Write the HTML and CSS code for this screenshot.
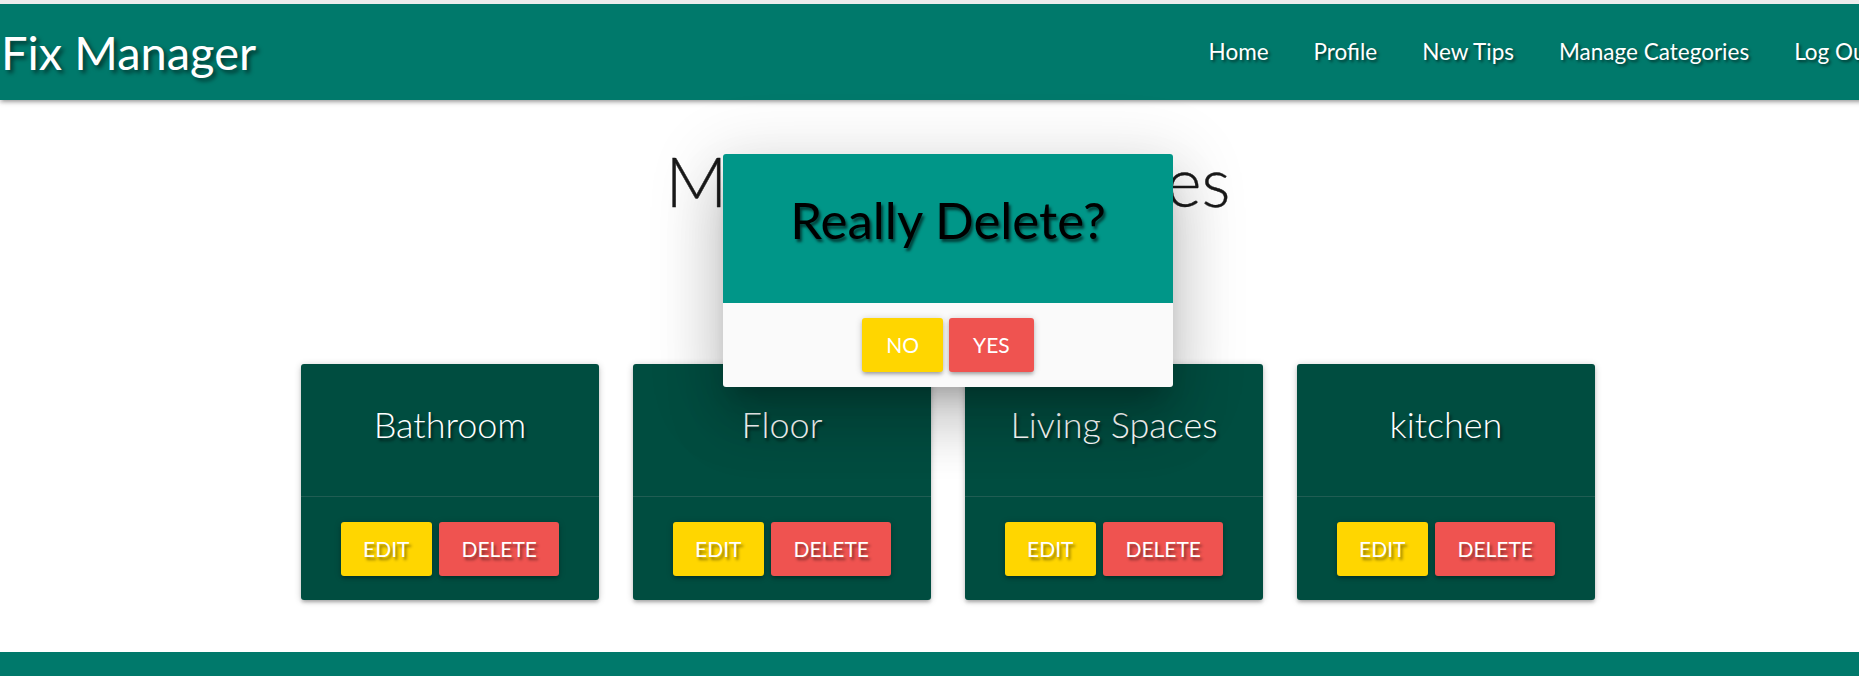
FILE: index.html
```html
<!DOCTYPE html>
<html lang="en">
<head>
<meta charset="utf-8">
<title>Fix Manager - Manage Categories</title>
<link rel="stylesheet" href="styles.css">
</head>
<body>
<div class="page">
  <nav class="navbar">
    <a class="brand" href="#">Fix Manager</a>
    <ul class="nav-links">
      <li><a href="#">Home</a></li>
      <li><a href="#">Profile</a></li>
      <li><a href="#">New Tips</a></li>
      <li><a href="#">Manage Categories</a></li>
      <li><a href="#">Log Out</a></li>
    </ul>
  </nav>

  <main class="main">
    <h3 class="page-title">Manage Categories</h3>
    <div class="cards">
      <div class="card">
        <div class="card-content"><span class="card-title">Bathroom</span></div>
        <div class="card-action"><a class="btn btn-edit" href="#">Edit</a><a class="btn btn-delete" href="#">Delete</a></div>
      </div>
      <div class="card">
        <div class="card-content"><span class="card-title">Floor</span></div>
        <div class="card-action"><a class="btn btn-edit" href="#">Edit</a><a class="btn btn-delete" href="#">Delete</a></div>
      </div>
      <div class="card">
        <div class="card-content"><span class="card-title">Living Spaces</span></div>
        <div class="card-action"><a class="btn btn-edit" href="#">Edit</a><a class="btn btn-delete" href="#">Delete</a></div>
      </div>
      <div class="card">
        <div class="card-content"><span class="card-title">kitchen</span></div>
        <div class="card-action"><a class="btn btn-edit" href="#">Edit</a><a class="btn btn-delete" href="#">Delete</a></div>
      </div>
    </div>
  </main>

  <footer class="page-footer"></footer>

  <div class="modal">
    <div class="modal-content">
      <h4 class="modal-title">Really Delete?</h4>
    </div>
    <div class="modal-footer">
      <a class="btn btn-no" href="#">No</a><a class="btn btn-yes" href="#">Yes</a>
    </div>
  </div>
</div>
</body>
</html>
```

FILE: styles.css
```css
html, body {
  margin: 0;
  padding: 0;
  overflow: hidden;
  background: #ffffff;
}

body {
  border-top: 4px solid #ececec;
  font-family: "Lato", "Liberation Sans", sans-serif;
  color: #212121;
}

.page {
  position: relative;
  width: 1896px;
  height: 672px;
  display: flex;
  flex-direction: column;
}

a {
  text-decoration: none;
  color: inherit;
}

/* ---------- navbar ---------- */
.navbar {
  height: 96px;
  background: #00796b;
  display: flex;
  align-items: center;
  justify-content: space-between;
  box-shadow: 0 3px 3px 0 rgba(0,0,0,0.14), 0 4px 2px -3px rgba(0,0,0,0.12), 0 1px 7px 0 rgba(0,0,0,0.2);
  position: relative;
  z-index: 2;
  flex: none;
}

.brand {
  padding-left: 1px;
  font-size: 47px;
  line-height: 96px;
  color: #ffffff;
  text-shadow: 3px 3px 4px rgba(0,0,0,0.55);
}

.nav-links {
  list-style: none;
  margin: 0;
  padding: 0;
  display: flex;
}

.nav-links a {
  display: block;
  padding: 0 22.5px;
  font-size: 22.5px;
  line-height: 96px;
  color: #ffffff;
  text-shadow: 2px 2px 3px rgba(0,0,0,0.55);
}

/* ---------- main ---------- */
.main {
  flex: none;
}

.page-title {
  margin: 41px 0 0;
  font-size: 68px;
  line-height: 79px;
  font-weight: 300;
  text-align: center;
  color: #1a1a1a;
  -webkit-text-stroke: 0.4px #1a1a1a;
}

.cards {
  margin-top: 144px;
  display: flex;
  justify-content: center;
  gap: 34px;
}

.card {
  width: 298px;
  background: #004d40;
  border-radius: 3px;
  box-shadow: 0 3px 3px 0 rgba(0,0,0,0.14), 0 4px 2px -3px rgba(0,0,0,0.12), 0 1px 7px 0 rgba(0,0,0,0.2);
}

.card-content {
  padding: 36px 36px 36px;
  text-align: center;
}

.card-title {
  display: block;
  font-size: 36px;
  line-height: 48px;
  font-weight: 300;
  color: #ffffff;
  text-shadow: 2px 3px 3px rgba(0,0,0,0.6);
  margin-bottom: 12px;
}

.card-action {
  border-top: 1px solid rgba(160,160,160,0.2);
  padding: 25px 36px 24px;
  display: flex;
  justify-content: center;
  gap: 7px;
}

/* ---------- buttons ---------- */
.btn {
  display: inline-block;
  height: 54px;
  line-height: 54px;
  padding: 0 22.5px;
  font-size: 21px;
  text-transform: uppercase;
  color: #ffffff;
  border-radius: 3px;
  box-shadow: 0 3px 3px 0 rgba(0,0,0,0.14), 0 4px 2px -3px rgba(0,0,0,0.12), 0 1px 7px 0 rgba(0,0,0,0.2);
}

.btn-edit,
.btn-delete {
  text-shadow: 2px 3px 3px rgba(0,0,0,0.45);
}

.btn-edit,
.btn-no {
  background: #ffd600;
}

.btn-delete,
.btn-yes {
  background: #ef5350;
}

.btn-no,
.btn-yes {
  padding: 0 24px;
}

/* ---------- footer ---------- */
.page-footer {
  margin-top: 52px;
  flex: 1;
  background: #00796b;
}

/* ---------- modal ---------- */
.modal {
  position: absolute;
  left: 723px;
  top: 150px;
  width: 450px;
  border-radius: 3px;
  overflow: hidden;
  background: #fafafa;
  z-index: 5;
  box-shadow: 0 36px 57px 4px rgba(0,0,0,0.14), 0 13px 69px 12px rgba(0,0,0,0.12), 0 16px 22px -10px rgba(0,0,0,0.2);
}

.modal-content {
  background: #009688;
  padding: 35px 36px 53px;
  text-align: center;
}

.modal-title {
  margin: 0;
  font-size: 51px;
  line-height: 61px;
  font-weight: 400;
  color: #000000;
  text-shadow: 2px 3px 3px rgba(0,0,0,0.6);
}

.modal-footer {
  height: 84px;
  display: flex;
  justify-content: center;
  align-items: center;
  gap: 6px;
}
```
